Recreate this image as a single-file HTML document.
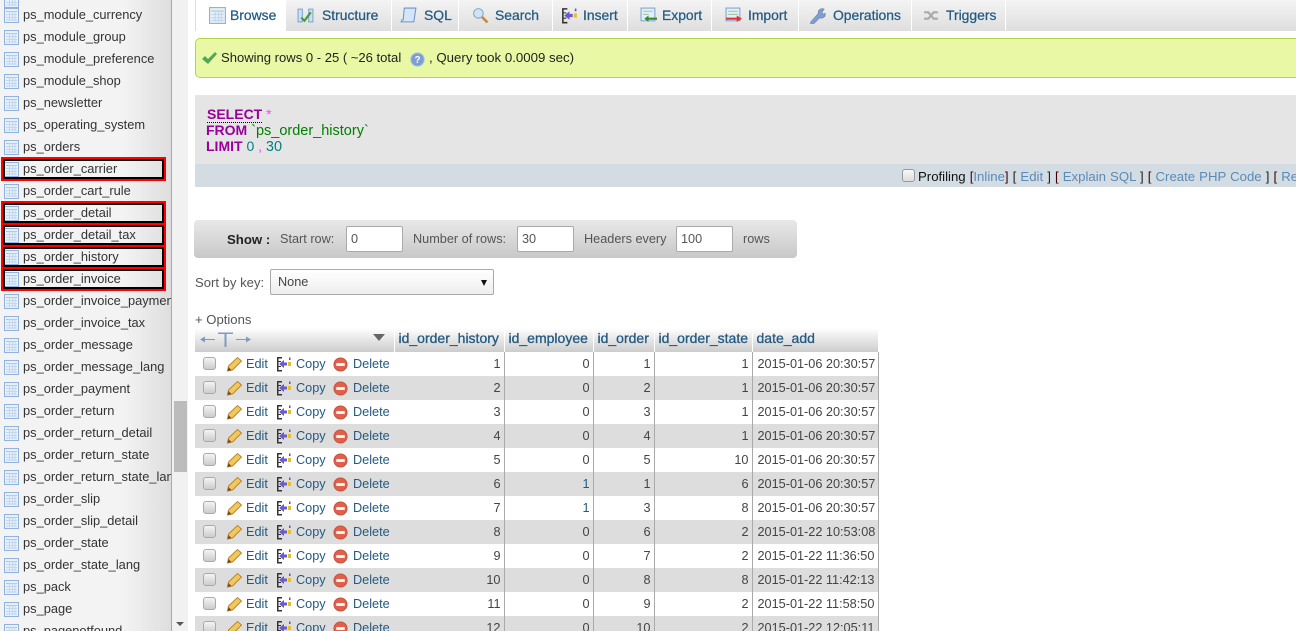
<!DOCTYPE html>
<html><head><meta charset="utf-8"><style>
html,body{margin:0;padding:0;background:#fff;width:1296px;height:631px;overflow:hidden;font-family:"Liberation Sans",Arial,sans-serif;color:#444}
*{box-sizing:border-box}
#root{position:absolute;left:0;top:0;width:1296px;height:631px;overflow:hidden}
.abs,.t,.i,.hl,.tab{position:absolute}
#side{position:absolute;left:0;top:0;width:172px;height:631px;background:linear-gradient(90deg,#f3f3f3 0,#f3f3f3 72%,#dedede 100%);border-right:1px solid #aaa;overflow:hidden}
.t{left:23px;font-size:12.85px;line-height:16px;color:#333;white-space:nowrap}
.i{left:4px;width:15px;height:15px;margin-top:1px}
.hl{left:1px;width:165px;height:24px;border:2px solid #f00;box-shadow:inset 0 0 0 2px #000;background:transparent}
.tab{top:0;height:31px;background:linear-gradient(#f4f4f4,#dedede);color:#235a81;font-size:13.9px;line-height:31px;white-space:nowrap;-webkit-text-stroke:.25px #235a81}
.tab svg{position:absolute;top:7px;left:13px;width:17px;height:17px}
.tab span{position:absolute;top:0}
table{position:absolute;left:195px;top:328px;border-collapse:collapse;table-layout:fixed;width:683px;font-size:12.7px}
th{height:24px;padding:0 3px 5px 4px;background:linear-gradient(#fff,#ccc);color:#235a81;text-align:left;font-weight:normal;-webkit-text-stroke:.3px #235a81;font-size:14px;border-right:1px solid #fff;white-space:nowrap;overflow:hidden}
td{height:24px;padding:0 3px 1px;text-align:right;border-right:1px solid #aaa;white-space:nowrap;color:#444}
td:last-child{text-align:left;padding-left:5px}
tr:nth-child(odd) td{background:#fff}
tr:nth-child(even) td{background:#ddd}
td.a{position:relative;border-right:0;color:#235a81;padding:0}
.a b{position:absolute;font-weight:normal;top:5px}
.a svg{position:absolute}
.cb{position:absolute;left:8px;top:5px;width:13px;height:13px;border:1px solid #aaa;border-radius:3px;background:linear-gradient(#f4f4f4,#ccc)}
a{color:#235a81;text-decoration:none}
</style></head><body><div id="root">
<svg width="0" height="0" style="position:absolute"><defs>
<symbol id="tb" viewBox="0 0 15 15"><rect x=".5" y=".5" width="14" height="14" fill="#e8f0fa" stroke="#8fb2de"/><path d="M2 3.500h11" stroke="#a9cfa9"/><path d="M2 6.500h11M2 9.500h11M2 12h11" stroke="#c2d6ec"/><path d="M5.500 3v10M8.500 3v10M11 3v10" stroke="#c2d6ec"/></symbol>
<symbol id="pe" viewBox="0 0 16 16"><path d="M1 15l1-5L11 1.500l4 3.500-9 9z" fill="#f0c860" stroke="#b8862c"/><path d="M1 15l1-4 3 3z" fill="#7a4a20"/></symbol>
<symbol id="co" viewBox="0 0 16 16"><path d="M1 1h5v1.500H2.500V5H5v1H2.500v4H5v1H2.500v3H6v1.500H1z" fill="#333"/><path d="M3 8l5-4v2.500h3v3H8V12z" fill="#6a5acd"/><rect x="12" y="6" width="3" height="4" fill="#e8c020"/><rect x="13" y="1.500" width="1.500" height="2.500" fill="#4a5ac0"/></symbol>
<symbol id="de" viewBox="0 0 16 16"><circle cx="8" cy="8" r="7" fill="#e0604a" stroke="#c8503c"/><rect x="3.500" y="6.500" width="9" height="3" fill="#fff"/></symbol>
</defs></svg>

<div id="side">
<svg class="i" style="top:-8px"><use href="#tb"/></svg>
<svg class="i" style="top:7px"><use href="#tb"/></svg><div class="t" style="top:7px">ps_module_currency</div>
<svg class="i" style="top:29px"><use href="#tb"/></svg><div class="t" style="top:29px">ps_module_group</div>
<svg class="i" style="top:51px"><use href="#tb"/></svg><div class="t" style="top:51px">ps_module_preference</div>
<svg class="i" style="top:73px"><use href="#tb"/></svg><div class="t" style="top:73px">ps_module_shop</div>
<svg class="i" style="top:95px"><use href="#tb"/></svg><div class="t" style="top:95px">ps_newsletter</div>
<svg class="i" style="top:117px"><use href="#tb"/></svg><div class="t" style="top:117px">ps_operating_system</div>
<svg class="i" style="top:139px"><use href="#tb"/></svg><div class="t" style="top:139px">ps_orders</div>
<svg class="i" style="top:161px"><use href="#tb"/></svg><div class="t" style="top:161px">ps_order_carrier</div>
<svg class="i" style="top:183px"><use href="#tb"/></svg><div class="t" style="top:183px">ps_order_cart_rule</div>
<svg class="i" style="top:205px"><use href="#tb"/></svg><div class="t" style="top:205px">ps_order_detail</div>
<svg class="i" style="top:227px"><use href="#tb"/></svg><div class="t" style="top:227px">ps_order_detail_tax</div>
<svg class="i" style="top:249px"><use href="#tb"/></svg><div class="t" style="top:249px">ps_order_history</div>
<svg class="i" style="top:271px"><use href="#tb"/></svg><div class="t" style="top:271px">ps_order_invoice</div>
<svg class="i" style="top:293px"><use href="#tb"/></svg><div class="t" style="top:293px">ps_order_invoice_payment</div>
<svg class="i" style="top:315px"><use href="#tb"/></svg><div class="t" style="top:315px">ps_order_invoice_tax</div>
<svg class="i" style="top:337px"><use href="#tb"/></svg><div class="t" style="top:337px">ps_order_message</div>
<svg class="i" style="top:359px"><use href="#tb"/></svg><div class="t" style="top:359px">ps_order_message_lang</div>
<svg class="i" style="top:381px"><use href="#tb"/></svg><div class="t" style="top:381px">ps_order_payment</div>
<svg class="i" style="top:403px"><use href="#tb"/></svg><div class="t" style="top:403px">ps_order_return</div>
<svg class="i" style="top:425px"><use href="#tb"/></svg><div class="t" style="top:425px">ps_order_return_detail</div>
<svg class="i" style="top:447px"><use href="#tb"/></svg><div class="t" style="top:447px">ps_order_return_state</div>
<svg class="i" style="top:469px"><use href="#tb"/></svg><div class="t" style="top:469px">ps_order_return_state_lang</div>
<svg class="i" style="top:491px"><use href="#tb"/></svg><div class="t" style="top:491px">ps_order_slip</div>
<svg class="i" style="top:513px"><use href="#tb"/></svg><div class="t" style="top:513px">ps_order_slip_detail</div>
<svg class="i" style="top:535px"><use href="#tb"/></svg><div class="t" style="top:535px">ps_order_state</div>
<svg class="i" style="top:557px"><use href="#tb"/></svg><div class="t" style="top:557px">ps_order_state_lang</div>
<svg class="i" style="top:579px"><use href="#tb"/></svg><div class="t" style="top:579px">ps_pack</div>
<svg class="i" style="top:601px"><use href="#tb"/></svg><div class="t" style="top:601px">ps_page</div>
<svg class="i" style="top:623px"><use href="#tb"/></svg><div class="t" style="top:623px">ps_pagenotfound</div>
<div class="hl" style="top:157px"></div><div class="hl" style="top:201px"></div><div class="hl" style="top:223px"></div><div class="hl" style="top:245px"></div><div class="hl" style="top:267px"></div>
</div>
<div class="abs" style="left:172px;top:0;width:16px;height:631px;background:#f1f1f1"></div>
<div class="abs" style="left:174px;top:401px;width:13px;height:71px;background:#bcbcbc"></div>
<div class="abs" style="left:176px;top:622px;width:0;height:0;border-left:4px solid transparent;border-right:4px solid transparent;border-top:4px solid #555"></div>

<!-- tabs -->
<div class="tab" style="left:195px;width:90px;background:#fff;border-left:1px solid #ddd"><svg><use href="#tb"/></svg><span style="left:34px">Browse</span></div>
<div class="tab" style="left:286px;width:105px"><svg style="left:11px" viewBox="0 0 16 16"><rect x="1" y="2" width="4" height="12" fill="#cfe0f2" stroke="#7fa5d6"/><rect x="11" y="2" width="4" height="12" fill="#cfe0f2" stroke="#7fa5d6"/><path d="M4 10l3 3 6-8" fill="none" stroke="#4a9a30" stroke-width="2"/></svg><span style="left:36px">Structure</span></div>
<div class="tab" style="left:392px;width:66px"><svg style="left:8px" viewBox="0 0 16 16"><path d="M4 1h11l-2 13H1l1-2h1z" fill="#d5e5f7" stroke="#6a94cc"/></svg><span style="left:32px">SQL</span></div>
<div class="tab" style="left:459px;width:93px"><svg viewBox="0 0 16 16"><circle cx="6" cy="6" r="4.500" fill="#cfe3f8" stroke="#8ab"/><path d="M9.500 9.500l5 5" stroke="#c98a3a" stroke-width="2.500"/></svg><span style="left:36px">Search</span></div>
<div class="tab" style="left:553px;width:74px"><svg style="left:8px"><use href="#co"/></svg><span style="left:30px">Insert</span></div>
<div class="tab" style="left:628px;width:83px"><svg style="left:12px" viewBox="0 0 16 16"><rect x="1" y="1" width="13" height="12" fill="#e4eefa" stroke="#7fa5d6"/><path d="M3 4h9M3 7h5" stroke="#9c9"/><path d="M4 11l4-3v2h8v2H8v2z" fill="#3a8a20"/></svg><span style="left:34px">Export</span></div>
<div class="tab" style="left:712px;width:86px"><svg style="left:13px" viewBox="0 0 16 16"><rect x="1" y="1" width="13" height="12" fill="#e4eefa" stroke="#7fa5d6"/><path d="M3 4h9M3 7h9" stroke="#9c9"/><path d="M1 10h10V8l5 3-5 3v-2H1z" fill="#e83030"/></svg><span style="left:36px">Import</span></div>
<div class="tab" style="left:799px;width:112px"><svg style="left:10px" viewBox="0 0 16 16"><path d="M2 14l7-8c-1-3 2-5 5-4l-2 3 1 2 2-1c1 3-2 5-5 4l-6 6c-2 1-3 0-2-2z" fill="#7d9fd8" stroke="#7a90b8"/></svg><span style="left:34px">Operations</span></div>
<div class="tab" style="left:912px;width:93px"><svg style="left:11px" viewBox="0 0 16 16"><path d="M1 5h4l5 6h4M1 11h4l5-6h4" fill="none" stroke="#aaa" stroke-width="2"/></svg><span style="left:34px">Triggers</span></div>
<div class="abs" style="left:1006px;top:0;width:290px;height:31px;background:linear-gradient(#f4f4f4,#dedede)"></div>

<!-- success -->
<div class="abs" style="left:195px;top:38px;width:1110px;height:40px;background:#e8f8a4;border:1px solid #b4d44e;border-radius:5px"></div>
<svg class="abs" style="left:201px;top:51px" width="17" height="14" viewBox="0 0 17 14"><path d="M1 8l3-3 3 3 7-7 2 2-9 10z" fill="#54a854"/></svg>
<div class="abs" style="left:221px;top:50px;font-size:13.05px;line-height:16px;color:#222;white-space:nowrap">Showing rows 0 - 25 ( ~26 total</div>
<svg class="abs" style="left:410px;top:52px" width="15" height="15"><circle cx="7.500" cy="7.500" r="6.800" fill="#7d9fd0" stroke="#b8c8e0"/><text x="7.500" y="11" font-size="10" font-weight="bold" font-family="Liberation Sans" text-anchor="middle" fill="#fff">?</text></svg>
<div class="abs" style="left:429px;top:50px;font-size:13.25px;line-height:16px;color:#222;white-space:nowrap">, Query took 0.0009 sec)</div>

<!-- sql -->
<div class="abs" style="left:195px;top:95px;width:1110px;height:69px;background:#e5e5e5"></div>
<div class="abs" style="left:195px;top:164px;width:1110px;height:23px;background:#d3dce3"></div>
<div class="abs" style="left:207px;top:106px;font-size:14px;line-height:16px;color:#909;font-weight:bold;white-space:nowrap"><span style="border-bottom:1px dotted #000">SELECT</span> <span style="color:#f4f;font-weight:normal">*</span></div>
<div class="abs" style="left:206px;top:122px;font-size:14px;line-height:16px;white-space:nowrap"><b style="color:#909">FROM</b> <span style="color:#008000;font-size:14.5px">`ps_order_history`</span></div>
<div class="abs" style="left:206px;top:138px;font-size:14px;line-height:16px;white-space:nowrap"><b style="color:#909">LIMIT</b> <span style="color:#008080">0</span> <span style="color:#f4f">,</span> <span style="color:#008080;font-size:14.5px">30</span></div>
<div class="abs" style="left:902px;top:169px;width:13px;height:13px;border:1px solid #999;border-radius:3px;background:linear-gradient(#f8f8f8,#ddd)"></div>
<div class="abs" style="left:918px;top:169px;font-size:13.2px;line-height:16px;color:#111;white-space:nowrap;word-spacing:.4px">Profiling <span style="color:#400">[</span><a href="#" style="color:#5a8ab8">Inline</a><span style="color:#400">]</span> <span style="color:#222">[</span> <a href="#" style="color:#5a8ab8">Edit</a> <span style="color:#222">]</span> <span style="color:#400">[</span> <a href="#" style="color:#5a8ab8">Explain SQL</a> <span style="color:#222">]</span> <span style="color:#400">[</span> <a href="#" style="color:#5a8ab8">Create PHP Code</a> <span style="color:#222">]</span> <span style="color:#400">[</span> <a href="#" style="color:#5a8ab8">Refresh</a> ]</div>

<!-- show bar -->
<div class="abs" style="left:194px;top:220px;width:603px;height:38px;background:linear-gradient(#e8e8e8,#c8c8c8);border-radius:4px"></div>
<div class="abs" style="left:227px;top:232px;font-size:13.2px;line-height:16px;font-weight:bold;color:#222">Show :</div>
<div class="abs" style="left:280px;top:231px;font-size:12.7px;line-height:16px;color:#555;white-space:nowrap">Start row:</div>
<div class="abs" style="left:346px;top:226px;width:57px;height:26px;background:#fff;border:1px solid #aaa;border-radius:2px;font-size:12.7px;line-height:24px;padding-left:4px;color:#555">0</div>
<div class="abs" style="left:413px;top:231px;font-size:12.7px;line-height:16px;color:#555;white-space:nowrap">Number of rows:</div>
<div class="abs" style="left:517px;top:226px;width:57px;height:26px;background:#fff;border:1px solid #aaa;border-radius:2px;font-size:12.7px;line-height:24px;padding-left:4px;color:#555">30</div>
<div class="abs" style="left:584px;top:231px;font-size:12.7px;line-height:16px;color:#555;white-space:nowrap">Headers every</div>
<div class="abs" style="left:676px;top:226px;width:57px;height:26px;background:#fff;border:1px solid #aaa;border-radius:2px;font-size:12.7px;line-height:24px;padding-left:4px;color:#555">100</div>
<div class="abs" style="left:743px;top:231px;font-size:12.7px;line-height:16px;color:#555">rows</div>

<div class="abs" style="left:195px;top:275px;font-size:13.1px;line-height:16px;color:#555;white-space:nowrap">Sort by key:</div>
<div class="abs" style="left:270px;top:269px;width:224px;height:26px;background:linear-gradient(#fff,#eee);border:1px solid #aaa;border-radius:2px;font-size:12.7px;line-height:25px;padding-left:7px;color:#444">None</div>
<div class="abs" style="left:481px;top:280px;width:0;height:0;border-left:3.500px solid transparent;border-right:3.500px solid transparent;border-top:6px solid #111"></div>
<div class="abs" style="left:195px;top:312px;font-size:13.1px;line-height:16px;color:#555;white-space:nowrap">+ Options</div>

<table>
<colgroup><col style="width:199px"><col style="width:110px"><col style="width:89px"><col style="width:61px"><col style="width:98px"><col style="width:126px"></colgroup>
<thead><tr><th style="position:relative"><svg style="position:absolute;left:5px;top:3px" width="52" height="17" viewBox="0 0 52 17"><path d="M0 8.500l5-3v2.500h10v1H5v2.500zM51 8.500l-5-3v2.500H36v1h10v2.500z" fill="#7d9cc0"/><path d="M18 1.500h15v1.500h-6.500v13h-2V3H18z" fill="#7d9cc0"/></svg><div style="position:absolute;left:178px;top:6px;width:0;height:0;border-left:6px solid transparent;border-right:6px solid transparent;border-top:7px solid #666"></div></th><th>id_order_history</th><th>id_employee</th><th>id_order</th><th>id_order_state</th><th>date_add</th></tr></thead>
<tbody>
<tr><td class="a"><span class="cb"></span><svg style="left:31px;top:4px" width="17" height="16"><use href="#pe"/></svg><b style="left:51px">Edit</b><svg style="left:81px;top:4px" width="16" height="16"><use href="#co"/></svg><b style="left:101px">Copy</b><svg style="left:138px;top:5px" width="15" height="15"><use href="#de"/></svg><b style="left:158px">Delete</b></td><td>1</td><td>0</td><td>1</td><td>1</td><td>2015-01-06 20:30:57</td></tr>
<tr><td class="a"><span class="cb"></span><svg style="left:31px;top:4px" width="17" height="16"><use href="#pe"/></svg><b style="left:51px">Edit</b><svg style="left:81px;top:4px" width="16" height="16"><use href="#co"/></svg><b style="left:101px">Copy</b><svg style="left:138px;top:5px" width="15" height="15"><use href="#de"/></svg><b style="left:158px">Delete</b></td><td>2</td><td>0</td><td>2</td><td>1</td><td>2015-01-06 20:30:57</td></tr>
<tr><td class="a"><span class="cb"></span><svg style="left:31px;top:4px" width="17" height="16"><use href="#pe"/></svg><b style="left:51px">Edit</b><svg style="left:81px;top:4px" width="16" height="16"><use href="#co"/></svg><b style="left:101px">Copy</b><svg style="left:138px;top:5px" width="15" height="15"><use href="#de"/></svg><b style="left:158px">Delete</b></td><td>3</td><td>0</td><td>3</td><td>1</td><td>2015-01-06 20:30:57</td></tr>
<tr><td class="a"><span class="cb"></span><svg style="left:31px;top:4px" width="17" height="16"><use href="#pe"/></svg><b style="left:51px">Edit</b><svg style="left:81px;top:4px" width="16" height="16"><use href="#co"/></svg><b style="left:101px">Copy</b><svg style="left:138px;top:5px" width="15" height="15"><use href="#de"/></svg><b style="left:158px">Delete</b></td><td>4</td><td>0</td><td>4</td><td>1</td><td>2015-01-06 20:30:57</td></tr>
<tr><td class="a"><span class="cb"></span><svg style="left:31px;top:4px" width="17" height="16"><use href="#pe"/></svg><b style="left:51px">Edit</b><svg style="left:81px;top:4px" width="16" height="16"><use href="#co"/></svg><b style="left:101px">Copy</b><svg style="left:138px;top:5px" width="15" height="15"><use href="#de"/></svg><b style="left:158px">Delete</b></td><td>5</td><td>0</td><td>5</td><td>10</td><td>2015-01-06 20:30:57</td></tr>
<tr><td class="a"><span class="cb"></span><svg style="left:31px;top:4px" width="17" height="16"><use href="#pe"/></svg><b style="left:51px">Edit</b><svg style="left:81px;top:4px" width="16" height="16"><use href="#co"/></svg><b style="left:101px">Copy</b><svg style="left:138px;top:5px" width="15" height="15"><use href="#de"/></svg><b style="left:158px">Delete</b></td><td>6</td><td style="color:#235a81">1</td><td>1</td><td>6</td><td>2015-01-06 20:30:57</td></tr>
<tr><td class="a"><span class="cb"></span><svg style="left:31px;top:4px" width="17" height="16"><use href="#pe"/></svg><b style="left:51px">Edit</b><svg style="left:81px;top:4px" width="16" height="16"><use href="#co"/></svg><b style="left:101px">Copy</b><svg style="left:138px;top:5px" width="15" height="15"><use href="#de"/></svg><b style="left:158px">Delete</b></td><td>7</td><td style="color:#235a81">1</td><td>3</td><td>8</td><td>2015-01-06 20:30:57</td></tr>
<tr><td class="a"><span class="cb"></span><svg style="left:31px;top:4px" width="17" height="16"><use href="#pe"/></svg><b style="left:51px">Edit</b><svg style="left:81px;top:4px" width="16" height="16"><use href="#co"/></svg><b style="left:101px">Copy</b><svg style="left:138px;top:5px" width="15" height="15"><use href="#de"/></svg><b style="left:158px">Delete</b></td><td>8</td><td>0</td><td>6</td><td>2</td><td>2015-01-22 10:53:08</td></tr>
<tr><td class="a"><span class="cb"></span><svg style="left:31px;top:4px" width="17" height="16"><use href="#pe"/></svg><b style="left:51px">Edit</b><svg style="left:81px;top:4px" width="16" height="16"><use href="#co"/></svg><b style="left:101px">Copy</b><svg style="left:138px;top:5px" width="15" height="15"><use href="#de"/></svg><b style="left:158px">Delete</b></td><td>9</td><td>0</td><td>7</td><td>2</td><td>2015-01-22 11:36:50</td></tr>
<tr><td class="a"><span class="cb"></span><svg style="left:31px;top:4px" width="17" height="16"><use href="#pe"/></svg><b style="left:51px">Edit</b><svg style="left:81px;top:4px" width="16" height="16"><use href="#co"/></svg><b style="left:101px">Copy</b><svg style="left:138px;top:5px" width="15" height="15"><use href="#de"/></svg><b style="left:158px">Delete</b></td><td>10</td><td>0</td><td>8</td><td>8</td><td>2015-01-22 11:42:13</td></tr>
<tr><td class="a"><span class="cb"></span><svg style="left:31px;top:4px" width="17" height="16"><use href="#pe"/></svg><b style="left:51px">Edit</b><svg style="left:81px;top:4px" width="16" height="16"><use href="#co"/></svg><b style="left:101px">Copy</b><svg style="left:138px;top:5px" width="15" height="15"><use href="#de"/></svg><b style="left:158px">Delete</b></td><td>11</td><td>0</td><td>9</td><td>2</td><td>2015-01-22 11:58:50</td></tr>
<tr><td class="a"><span class="cb"></span><svg style="left:31px;top:4px" width="17" height="16"><use href="#pe"/></svg><b style="left:51px">Edit</b><svg style="left:81px;top:4px" width="16" height="16"><use href="#co"/></svg><b style="left:101px">Copy</b><svg style="left:138px;top:5px" width="15" height="15"><use href="#de"/></svg><b style="left:158px">Delete</b></td><td>12</td><td>0</td><td>10</td><td>2</td><td>2015-01-22 12:05:11</td></tr>
</tbody></table>
</div></body></html>
